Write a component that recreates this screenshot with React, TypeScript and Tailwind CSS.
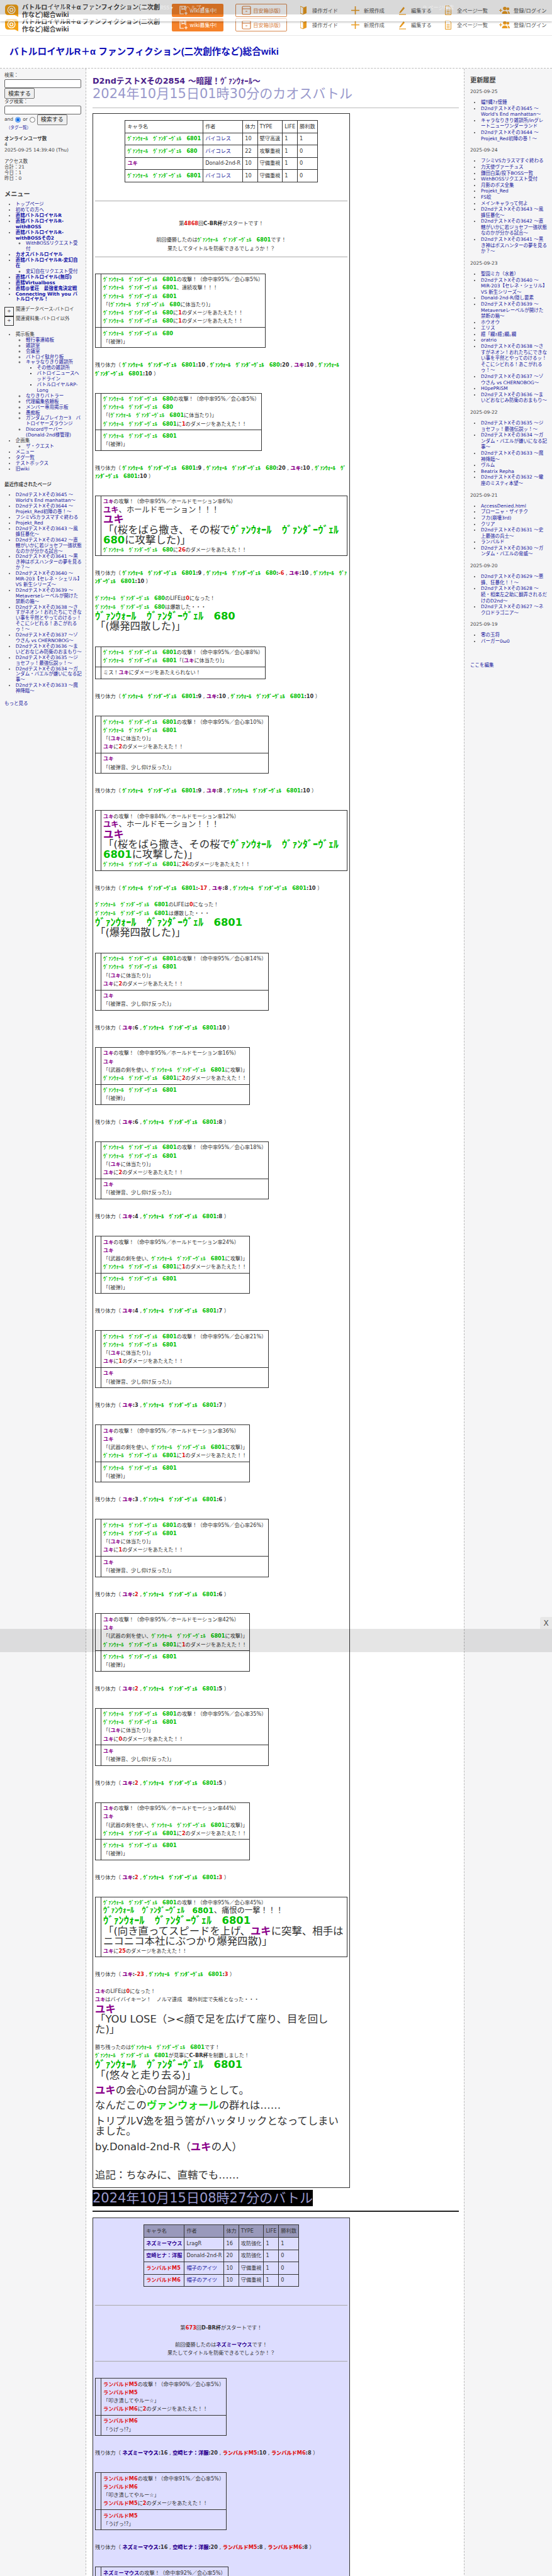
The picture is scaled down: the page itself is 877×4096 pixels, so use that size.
import type { ReactNode } from 'react';

const V = 'ｳﾞｧﾝｳｫｰﾙ　ｳﾞｧﾝﾀﾞｰｳﾞｪﾙ　';

function G({ n }: { n: string }) {
  return <b className="text-[#00c000]">{V}{n}</b>;
}
function Y() {
  return <b className="text-[#8a008a]">ユキ</b>;
}
function R({ children }: { children: ReactNode }) {
  return <b className="text-[#e01010]">{children}</b>;
}
function N() {
  return <b className="text-[#2c0090]">ネズミーマウス</b>;
}
function H() {
  return <b className="text-[#2c0090]">空崎ヒナ：洋服</b>;
}

function Card({ top, bottom }: { top: ReactNode; bottom?: ReactNode }) {
  return (
    <table className="border-collapse border border-[#333]">
      <tbody>
        <tr>
          <td className="w-[9px] min-w-[9px] border border-[#333]"></td>
          <td className="border border-[#333] px-[3px] py-[2.500px]">{top}</td>
        </tr>
        {bottom && (
          <tr>
            <td className="border border-[#333]"></td>
            <td className="border border-[#333] px-[3px] py-[2.500px]">{bottom}</td>
          </tr>
        )}
      </tbody>
    </table>
  );
}

function Hp({ children }: { children: ReactNode }) {
  return <div className="mt-[21px] mb-[23.700px]">残り体力（ {children} ）</div>;
}

function Val({ name, v, red }: { name: ReactNode; v: string; red?: boolean }) {
  return <b>{name}:{red ? <span className="text-[#e01010]">{v}</span> : v}</b>;
}

function Sep() {
  return <> , </>;
}

function YukiHit({ pct, dmg }: { pct: number; dmg: number }) {
  return (
    <Card
      top={<>
        <div><Y />の攻撃！（命中率95%／ホールドモーション率{pct}%）</div>
        <div><Y /></div>
        <div>「(武器の剣を使い、<G n="6801" />に攻撃)」</div>
        <div><G n="6801" />に<R>{dmg}</R>のダメージをあたえた！！</div>
      </>}
      bottom={<>
        <div><G n="6801" /></div>
        <div>「(被弾)」</div>
      </>}
    />
  );
}

function VanHit({ pct, dmg }: { pct: number; dmg: number }) {
  return (
    <Card
      top={<>
        <div><G n="6801" />の攻撃！（命中率95%／会心率{pct}%）</div>
        <div><G n="6801" /></div>
        <div>「(<Y />に体当たり)」</div>
        <div><Y />に<R>{dmg}</R>のダメージをあたえた！！</div>
      </>}
      bottom={<>
        <div><Y /></div>
        <div>「(被弾音、少し仰け反った)」</div>
      </>}
    />
  );
}

function HpDuel({ y, v, ry, rv }: { y: number; v: number; ry?: boolean; rv?: boolean }) {
  return (
    <Hp>
      <Val name={<Y />} v={String(y)} red={ry} /><Sep />
      <Val name={<G n="6801" />} v={String(v)} red={rv} />
    </Hp>
  );
}

function Ran({ m }: { m: string }) {
  return <b className="text-[#e01010]">ランバルド{m}</b>;
}

function RanCard({ a, b, pct, hit }: { a: string; b: string; pct: number; hit: number }) {
  return (
    <Card
      top={<>
        <div><Ran m={a} />の攻撃！（命中率{pct}%／会心率5%）</div>
        <div><Ran m={a} /></div>
        <div>「叩き潰してやルー☆」</div>
        <div><Ran m={b} />に<R>{hit}</R>のダメージをあたえた！！</div>
      </>}
      bottom={<>
        <div><Ran m={b} /></div>
        <div>「うげっ!?」</div>
      </>}
    />
  );
}

const headCell = 'border border-[#333] px-[3px] h-[19.600px] text-left font-normal';

function Result1() {
  const rows: [ReactNode, ReactNode, string, string, string, string][] = [
    [<G n="6801" />, <a className="text-[#1c1c9c]">バイコレス</a>, '10', '堅守高速', '1', '1'],
    [<G n="680" />, <a className="text-[#1c1c9c]">バイコレス</a>, '22', '攻撃重視', '1', '0'],
    [<Y />, 'Donald-2nd-R', '10', '守備重視', '1', '0'],
    [<G n="6801" />, <a className="text-[#1c1c9c]">バイコレス</a>, '10', '守備重視', '1', '0'],
  ];
  return (
    <table className="mx-auto border-collapse">
      <thead>
        <tr>
          {['キャラ名', '作者', '体力', 'TYPE', 'LIFE', '勝利数'].map(t => <th key={t} className={headCell}>{t}</th>)}
        </tr>
      </thead>
      <tbody>
        {rows.map((r, i) => (
          <tr key={i}>
            {r.map((c, j) => <td key={j} className="border border-[#333] px-[3px] h-[19.600px]">{c}</td>)}
          </tr>
        ))}
      </tbody>
    </table>
  );
}

function Result2() {
  const rows: [ReactNode, ReactNode, string, string, string, string][] = [
    [<N />, 'LragR', '16', '攻防強化', '1', '1'],
    [<H />, 'Donald-2nd-R', '20', '攻防強化', '1', '0'],
    [<Ran m="M5" />, <a className="text-[#1c1c9c]">帽子のアイツ</a>, '10', '守備重視', '1', '0'],
    [<Ran m="M6" />, <a className="text-[#1c1c9c]">帽子のアイツ</a>, '10', '守備重視', '1', '0'],
  ];
  return (
    <table className="mx-auto border-collapse">
      <thead>
        <tr className="bg-[#9999bb]">
          {['キャラ名', '作者', '体力', 'TYPE', 'LIFE', '勝利数'].map(t => <th key={t} className={headCell}>{t}</th>)}
        </tr>
      </thead>
      <tbody>
        {rows.map((r, i) => (
          <tr key={i}>
            {r.map((c, j) => <td key={j} className="border border-[#333] px-[3px] h-[19.600px]">{c}</td>)}
          </tr>
        ))}
      </tbody>
    </table>
  );
}

function Battle1() {
  return (
    <div className="border border-[#333] px-[3px] pt-[10px] pb-[11px] w-[409px] text-[8.180px] leading-[13.200px] text-[#333]">
      <Result1 />
      <hr className="mt-[29px] border-[#aaa]" />
      <div className="mt-[29px] text-center">
        第<R>4868</R>回<b>C-BR杯</b>がスタートです！<br /><br />
        前回優勝したのは<G n="6801" />です！<br />
        果たしてタイトルを防衛できるでしょうか！？
      </div>
      <hr className="mt-[6px] mb-[26px] border-[#aaa]" />

      <Card
        top={<>
          <div><G n="6801" />の攻撃！（命中率95%／会心率5%）</div>
          <div><G n="6801" />、連続攻撃！！！</div>
          <div><G n="6801" /></div>
          <div>「(<G n="680" />に体当たり)」</div>
          <div><G n="680" />に<R>1</R>のダメージをあたえた！！</div>
          <div><G n="680" />に<R>1</R>のダメージをあたえた！！</div>
        </>}
        bottom={<>
          <div><G n="680" /></div>
          <div>「(被弾)」</div>
        </>}
      />
      <Hp>
        <Val name={<G n="6801" />} v="10" /><Sep /><Val name={<G n="680" />} v="20" /><Sep />
        <Val name={<Y />} v="10" /><Sep /><Val name={<G n="6801" />} v="10" />
      </Hp>

      <Card
        top={<>
          <div><G n="680" />の攻撃！（命中率95%／会心率5%）</div>
          <div><G n="680" /></div>
          <div>「(<G n="6801" />に体当たり)」</div>
          <div><G n="6801" />に<R>1</R>のダメージをあたえた！！</div>
        </>}
        bottom={<>
          <div><G n="6801" /></div>
          <div>「(被弾)」</div>
        </>}
      />
      <Hp>
        <Val name={<G n="6801" />} v="9" /><Sep /><Val name={<G n="680" />} v="20" /><Sep />
        <Val name={<Y />} v="10" /><Sep /><Val name={<G n="6801" />} v="10" />
      </Hp>

      <Card
        top={<>
          <div><Y />の攻撃！（命中率95%／ホールドモーション率6%）</div>
          <div className="text-[12.300px] leading-[13.800px]"><Y />、ホールドモーション！！！</div>
          <div className="text-[16.400px] leading-[16.400px]">
            <Y /><br />
            「(桜をばら撒き、その桜で<G n="680" />に攻撃した)」
          </div>
          <div><G n="680" />に<R>26</R>のダメージをあたえた！！</div>
        </>}
      />
      <Hp>
        <Val name={<G n="6801" />} v="9" /><Sep /><Val name={<G n="680" />} v="-6" red /><Sep />
        <Val name={<Y />} v="10" /><Sep /><Val name={<G n="6801" />} v="10" />
      </Hp>
      <div className="-mt-[10px] mb-[23px]">
        <G n="680" />のLIFEは<R>0</R>になった！<br />
        <G n="680" />は爆散した・・・
        <div className="text-[16.400px] leading-[16.400px]">
          <G n="680" /><br />
          「(爆発四散した)」
        </div>
      </div>

      <Card
        top={<>
          <div><G n="6801" />の攻撃！（命中率95%／会心率8%）</div>
          <div><G n="6801" />「(<Y />に体当たり)」</div>
        </>}
        bottom={<div>ミス！<Y />にダメージをあたえられない！</div>}
      />
      <Hp>
        <Val name={<G n="6801" />} v="9" /><Sep /><Val name={<Y />} v="10" /><Sep /><Val name={<G n="6801" />} v="10" />
      </Hp>

      <VanHit pct={10} dmg={2} />
      <Hp>
        <Val name={<G n="6801" />} v="9" /><Sep /><Val name={<Y />} v="8" /><Sep /><Val name={<G n="6801" />} v="10" />
      </Hp>

      <Card
        top={<>
          <div><Y />の攻撃！（命中率84%／ホールドモーション率12%）</div>
          <div className="text-[12.300px] leading-[13.800px]"><Y />、ホールドモーション！！！</div>
          <div className="text-[16.400px] leading-[16.400px]">
            <Y /><br />
            「(桜をばら撒き、その桜で<G n="6801" />に攻撃した)」
          </div>
          <div><G n="6801" />に<R>26</R>のダメージをあたえた！！</div>
        </>}
      />
      <Hp>
        <Val name={<G n="6801" />} v="-17" red /><Sep /><Val name={<Y />} v="8" /><Sep /><Val name={<G n="6801" />} v="10" />
      </Hp>
      <div className="-mt-[10px] mb-[23px]">
        <G n="6801" />のLIFEは<R>0</R>になった！<br />
        <G n="6801" />は爆散した・・・
        <div className="text-[16.400px] leading-[16.400px]">
          <G n="6801" /><br />
          「(爆発四散した)」
        </div>
      </div>

      <VanHit pct={14} dmg={2} />
      <HpDuel y={6} v={10} />
      <YukiHit pct={16} dmg={2} />
      <HpDuel y={6} v={8} />
      <VanHit pct={18} dmg={2} />
      <HpDuel y={4} v={8} />
      <YukiHit pct={24} dmg={1} />
      <HpDuel y={4} v={7} />
      <VanHit pct={21} dmg={1} />
      <HpDuel y={3} v={7} />
      <YukiHit pct={36} dmg={1} />
      <HpDuel y={3} v={6} />
      <VanHit pct={26} dmg={1} />
      <HpDuel y={2} v={6} ry />
      <YukiHit pct={42} dmg={1} />
      <HpDuel y={2} v={5} ry />
      <VanHit pct={35} dmg={0} />
      <HpDuel y={2} v={5} ry />
      <YukiHit pct={44} dmg={2} />
      <HpDuel y={2} v={3} ry rv />

      <Card
        top={<>
          <div><G n="6801" />の攻撃！（命中率95%／会心率45%）</div>
          <div className="text-[12.300px] leading-[13.800px]"><G n="6801" />、痛恨の一撃！！！</div>
          <div className="text-[16.400px] leading-[16.400px]">
            <G n="6801" /><br />
            「(向き直ってスピードを上げ、<Y />に突撃、相手はニコニコ本社にぶつかり爆発四散)」
          </div>
          <div><Y />に<R>25</R>のダメージをあたえた！！</div>
        </>}
      />
      <HpDuel y={-23} v={3} ry rv />
      <div className="-mt-[10px]">
        <Y />のLIFEは<R>0</R>になった！<br />
        <Y />はバイバイキーン！　ノルマ達成　場外判定で失格となった・・・
        <div className="text-[16.400px] leading-[16.400px]">
          <Y /><br />
          「YOU LOSE（&gt;&lt;顔で足を広げて座り、目を回した)」
        </div>
      </div>
      <div className="mt-[13px]">
        勝ち残ったのは<G n="6801" />です！<br />
        <G n="6801" />が見事に<b>C-BR杯</b>を制覇しました！
        <div className="text-[16.400px] leading-[16.400px]">
          <G n="6801" /><br />
          「(悠々と走り去る)」
        </div>
      </div>
      <div className="mt-[8px] text-[16.400px] leading-[16.400px]">
        <div><Y />の会心の台詞が違うとして。</div>
        <div className="mt-[8px]">なんだこの<span className="text-[#20dd20] font-bold">ヴァンウォール</span>の群れは……</div>
        <div className="mt-[8px]">トリプルV逸を狙う筈がハッタリックとなってしまいました。</div>
        <div className="mt-[8px]">by.Donald-2nd-R（<Y />の人）</div>
        <div className="mt-[29px]">追記：ちなみに、直轄でも……</div>
      </div>
    </div>
  );
}

function Battle2() {
  return (
    <div className="border border-[#333] bg-[#ddddff] px-[3px] pt-[10px] pb-[8px] w-[409px] text-[8.180px] leading-[13.200px] text-[#333]">
      <Result2 />
      <hr className="mt-[29px] border-[#aaa]" />
      <div className="mt-[29px] text-center">
        第<R>673</R>回<b>D-BR杯</b>がスタートです！<br /><br />
        前回優勝したのは<N />です！<br />
        果たしてタイトルを防衛できるでしょうか！？
      </div>
      <hr className="mt-[6px] mb-[26px] border-[#aaa]" />
      <RanCard a="M5" b="M6" pct={90} hit={2} />
      <Hp>
        <Val name={<N />} v="16" /><Sep /><Val name={<H />} v="20" /><Sep />
        <Val name={<Ran m="M5" />} v="10" /><Sep /><Val name={<Ran m="M6" />} v="8" />
      </Hp>
      <RanCard a="M6" b="M5" pct={91} hit={2} />
      <Hp>
        <Val name={<N />} v="16" /><Sep /><Val name={<H />} v="20" /><Sep />
        <Val name={<Ran m="M5" />} v="8" /><Sep /><Val name={<Ran m="M6" />} v="8" />
      </Hp>
      <Card
        top={<>
          <div><N />の攻撃！（命中率92%／会心率5%）</div>
          <div><N /></div>
        </>}
      />
    </div>
  );
}

type Item = { t: string; b?: boolean; plain?: boolean; sub?: Item[] };

const menu: Item[] = [
  { t: 'トップページ' },
  { t: '初めての方へ' },
  { t: '直轄バトルロイヤルR', b: true },
  { t: '直轄バトルロイヤルR-withBOSS', b: true },
  { t: '直轄バトルロイヤルR-withBOSSその2', b: true, sub: [{ t: 'WithBOSSリクエスト受付' }] },
  { t: 'カオスバトルロイヤル', b: true },
  { t: '直轄バトルロイヤルR-変幻自在', b: true, sub: [{ t: '変幻自在リクエスト受付' }] },
  { t: '直轄バトルロイヤル(無印)', b: true },
  { t: '直轄Virtualboss', b: true },
  { t: '直轄@雀荘　最強雀鬼決定戦', b: true },
  { t: 'Connecting With you バトルロイヤル！', b: true },
];

const boards: Item[] = [
  {
    t: '掲示板集', plain: true, sub: [
      { t: '軽行事連絡板' },
      { t: '雑談室' },
      { t: '会議室' },
      { t: 'バトロイ駄弁り板' },
      { t: 'キャラなりきり雑談所', sub: [{ t: 'その他の雑談所' }, { t: 'バトロイニュースヘッドライン' }, { t: 'バトルロイヤルRP-Long' }] },
      { t: 'なりきりバトラー' },
      { t: '代理編集依頼板' },
      { t: 'メンバー専用掲示板' },
      { t: '愚痴板' },
      { t: 'ガンダムブレイカー3　バトロイヤーズラウンジ' },
      { t: 'Discordサーバー(Donald-2nd様管理)' },
    ],
  },
  { t: '企画集', plain: true, sub: [{ t: 'ザ・クエスト' }] },
  { t: 'メニュー' },
  { t: 'タグ一覧' },
  { t: 'テストボックス' },
  { t: '旧wiki' },
];

const recent = [
  'D2ndテストXその3645 ～World\'s End manhattan～',
  'D2ndテストXその3644 ～Projekt_Red初陣の巻！～',
  'フシミVSカラスマすぐ終わる',
  'Projekt_Red',
  'D2ndテストXその3643 ～風蜂狂暴化～',
  'D2ndテストXその3642 ～直轄がいかに若ジョセフ一強状態なのかが分かる試合～',
  'D2ndテストXその3641 ～黒き神はボスハンターの夢を見るか？～',
  'D2ndテストXその3640 ～MIR-203【セレネ・シェリル】VS 新生シリーズ～',
  'D2ndテストXその3639 ～Metaverseレーベルが開けた禁断の箱～',
  'D2ndテストXその3638 ～さすがネオン！おれたちにできない事を平然とやってのけるッ！そこにシビれる！あこがれるゥ！～',
  'D2ndテストXその3637 ～ゾウさん vs CHERNOBOG～',
  'D2ndテストXその3636 ～まいどおなじみ防衛のおまもり～',
  'D2ndテストXその3635 ～ジョセフッ！最強伝説ッ！～',
  'D2ndテストXその3634 ～ガンダム・バエルが嫌いになる記事～',
  'D2ndテストXその3633 ～魔神降臨～',
];

const history: [string, string[]][] = [
  ['2025-09-25', ['蟷ｻ蝿?ｫ懷錘', 'D2ndテストXその3645 ～World\'s End manhattan～', 'キャラなりきり雑談所/inグレートニューワンダーランド', 'D2ndテストXその3644 ～Projekt_Red初陣の巻！～']],
  ['2025-09-24', ['フシミVSカラスマすぐ終わる', '力天使ヴァーチュス', '鎌田白菜/投下BOSS一覧', 'WithBOSSリクエスト受付', '月影のボス全集', 'Projekt_Red', 'FS蛟', 'メインキャラって何よ', 'D2ndテストXその3643 ～風蜂狂暴化～', 'D2ndテストXその3642 ～直轄がいかに若ジョセフ一強状態なのかが分かる試合～', 'D2ndテストXその3641 ～黒き神はボスハンターの夢を見るか？～']],
  ['2025-09-23', ['聖園ミカ（水着）', 'D2ndテストXその3640 ～MIR-203【セレネ・シェリル】VS 新生シリーズ～', 'Donald-2nd-R/隠し要素', 'D2ndテストXその3639 ～Metaverseレーベルが開けた禁断の箱～', 'ホウオウ', 'エリス', '繧「繝ｫ繧ｭ繝｡繝', 'oratrio', 'D2ndテストXその3638 ～さすがネオン！おれたちにできない事を平然とやってのけるッ！そこにシビれる！あこがれるゥ！～', 'D2ndテストXその3637 ～ゾウさん vs CHERNOBOG～', 'H0pePRiSM', 'D2ndテストXその3636 ～まいどおなじみ防衛のおまもり～']],
  ['2025-09-22', ['D2ndテストXその3635 ～ジョセフッ！最強伝説ッ！～', 'D2ndテストXその3634 ～ガンダム・バエルが嫌いになる記事～', 'D2ndテストXその3633 ～魔神降臨～', 'ヴルム', 'Beatrix Repha', 'D2ndテストXその3632 ～蠍座のミスティ本望～']],
  ['2025-09-21', ['AccessDenied.html', 'ブローニャ・ザイチク', 'フカ(崩壊3rd)', 'クリア', 'D2ndテストXその3631 ～史上最強の兵士～', 'ランバルド', 'D2ndテストXその3630 ～ガンダム・バエルの脅威～']],
  ['2025-09-20', ['D2ndテストXその3629 ～悪蜂、狂暴化！！～', 'D2ndテストXその3628 ～続・相楽左之助に翻弄されるだけのD2nd～', 'D2ndテストXその3627 ～ネクロドラゴニア～']],
  ['2025-09-19', ['零の玉将', 'バーガー0ω0']],
];

function Tree({ items, depth }: { items: Item[]; depth: number }) {
  const ul = depth === 0 ? 'list-disc pl-[17.700px]' : depth === 1 ? 'list-[circle] pl-[16.400px]' : 'list-[square] pl-[17.500px]';
  return (
    <ul className={ul}>
      {items.map(it => (
        <li key={it.t}>
          <span className={it.plain ? '' : it.b ? 'font-bold text-[#1212a8]' : 'text-[#2020a0]'}>{it.t}</span>
          {it.sub && <Tree items={it.sub} depth={depth + 1} />}
        </li>
      ))}
    </ul>
  );
}

function LeftPane() {
  return (
    <aside className="w-[137px] shrink-0 border-r border-dashed border-[#bbb] bg-[#f5f5f6] pl-[7px] pr-[6px] pt-[7px] text-[7.500px] leading-[8.900px] text-[#444]">
      <div>検索：</div>
      <input className="block w-[122px] h-[14px] border border-[#666] rounded-[2px] bg-white mt-[1px]" readOnly />
      <button className="block w-[48px] h-[17px] mt-[0.500px] border border-[#777] rounded-[2px] bg-[#efefef] text-[9px] leading-[14px] text-[#222]">検索する</button>
      <div className="mt-[0.500px]">タグ検索：</div>
      <input className="block w-[122px] h-[14px] border border-[#666] rounded-[2px] bg-white mt-[1px]" readOnly />
      <div className="flex items-center h-[17px]">
        <span>and</span>
        <input type="radio" defaultChecked className="mx-[3px] size-[9px] accent-[#1a73e8]" />
        <span>or</span>
        <input type="radio" className="mx-[3px] size-[9px]" />
        <button className="w-[48px] h-[17px] border border-[#777] rounded-[2px] bg-[#efefef] text-[9px] leading-[14px] text-[#222]">検索する</button>
      </div>
      <div className="mt-[0.500px] pl-[3px] text-[6.500px] text-[#2020a0]">（タグ一覧）</div>
      <div className="mt-[9px] font-bold">オンラインユーザ数</div>
      <div>4</div>
      <div>2025-09-25 14:39:40 (Thu)</div>
      <div className="mt-[9px]">アクセス数</div>
      <div>合計：21</div>
      <div>今日：1</div>
      <div>昨日：0</div>
      <div className="mt-[13px] text-[10.200px] leading-[14px] font-bold">メニュー</div>
      <div className="mt-[5.500px]"><Tree items={menu} depth={0} /></div>
      <div className="mt-[6.500px] flex">
        <span className="flex items-center justify-center w-[15px] h-[15px] border border-[#333] shrink-0">+</span>
        <span className="pl-[3px]">関連データベース-バトロイ</span>
      </div>
      <div className="flex">
        <span className="flex items-center justify-center w-[15px] h-[15px] border border-[#333] shrink-0">+</span>
        <span className="pl-[3px]">関連資料集-バトロイ以外</span>
      </div>
      <div className="mt-[10px]"><Tree items={boards} depth={0} /></div>
      <div className="mt-[16px] font-bold">最近作成されたページ</div>
      <div className="mt-[8px]">
        <ul className="list-disc pl-[17.700px]">
          {recent.map(r => <li key={r} className="text-[#2020a0] marker:text-[#444]">{r}</li>)}
        </ul>
      </div>
      <div className="mt-[11px] text-[#2020a0]">もっと見る</div>
    </aside>
  );
}

function RightPane() {
  return (
    <aside className="flex-1 border-l border-dashed border-[#bbb] bg-[#f5f5f6] pl-[9px] pr-[7px] pt-[12px] text-[7.500px] leading-[9.600px] text-[#444]">
      <div className="text-[10.200px] leading-[14px] font-bold">更新履歴</div>
      {history.map(([d, items], i) => (
        <div key={d} className={i === 0 ? 'mt-[6px]' : 'mt-[9px]'}>
          <div>{d}</div>
          <ul className="list-disc pl-[17px] mt-[7.500px] text-[#2020a0] marker:text-[#444]">
            {items.map(t => <li key={t}>{t}</li>)}
          </ul>
        </div>
      ))}
      <div className="mt-[28px] text-[#2020a0]">ここを編集</div>
    </aside>
  );
}

function Logo() {
  return (
    <svg width="21" height="20" viewBox="0 0 31 29" className="shrink-0">
      <path d="M7 0h17a7 7 0 0 1 7 7v22l-8-4H7a7 7 0 0 1-7-7V7a7 7 0 0 1 7-7z" fill="#f5a316" />
      <circle cx="15" cy="12.5" r="8.5" fill="none" stroke="#fff" strokeWidth="2" />
      <circle cx="15" cy="12.5" r="3.6" fill="none" stroke="#fff" strokeWidth="2" />
    </svg>
  );
}

function HeaderRow() {
  return (
    <div className="flex items-center h-full text-[8.200px] text-[#555] font-['Noto_Sans_CJK_JP',sans-serif]">
      <div className="ml-[8px] flex items-center w-[266px] shrink-0">
        <Logo />
        <div className="ml-[6px] w-[228px] text-[10px] leading-[11.600px] font-bold text-[#444]">バトルロイヤルR＋α ファンフィクション(二次創作など)総合wiki</div>
      </div>
      <div className="ml-[-1px] flex items-center justify-center w-[82px] h-[21px] rounded-[2px] bg-[#f5822a] text-white shrink-0">
        <svg width="15" height="15" viewBox="0 0 15 15" fill="none" stroke="#fff" strokeWidth="1.2"><path d="M8 13H2V1h9v7" /><path d="M5 1v5l2-1 2 1V1" /><path d="M11.5 9.5v5M9 12h5" /></svg>
        <span className="ml-[3px]">wiki募集中!</span>
      </div>
      <div className="ml-[19px] flex items-center justify-center w-[82px] h-[21px] rounded-[2px] border border-[#d98a50] text-[#d87b3a] shrink-0">
        <svg width="15" height="15" viewBox="0 0 15 15" fill="none" stroke="#d87b3a" strokeWidth="1.2"><rect x="1" y="1" width="13" height="13" rx="1.5" /><path d="M1 5h13M6 9h3" /></svg>
        <span className="ml-[3px]">目安箱(β版)</span>
      </div>
      <svg className="ml-[21px] shrink-0" width="10" height="15" viewBox="0 0 10 15"><path d="M0 1l5 2v11l-5-2z" fill="none" stroke="#e89a20" strokeWidth="1" /><path d="M5 3l5-2v11l-5 2z" fill="#e89a20" /></svg>
      <span className="ml-[9px] w-[40px] whitespace-nowrap">操作ガイド</span>
      <svg className="ml-[22px] shrink-0" width="13" height="13" viewBox="0 0 13 13"><path d="M6.5 0v13M0 6.5h13" stroke="#e89a20" strokeWidth="1.6" /></svg>
      <span className="ml-[7px] w-[33px] whitespace-nowrap">新規作成</span>
      <svg className="ml-[23px] shrink-0" width="11" height="15" viewBox="0 0 11 15"><path d="M1 10l6-8 2 2-6 7-2.5 1z" fill="#e89a20" /><path d="M0 14h11" stroke="#e89a20" strokeWidth="1.2" /></svg>
      <span className="ml-[8px] w-[33px] whitespace-nowrap">編集する</span>
      <svg className="ml-[21px] shrink-0" width="10" height="15" viewBox="0 0 10 15" fill="none" stroke="#e89a20" strokeWidth="1"><path d="M.5.5h6l3 3v11h-9z" /><path d="M2.5 7h5M2.5 9.5h5M2.5 12h5" /></svg>
      <span className="ml-[9px] w-[49px] whitespace-nowrap">全ページ一覧</span>
      <svg className="ml-[18px] shrink-0" width="17" height="13" viewBox="0 0 17 13" fill="#e89a20"><path d="M0 6.5h5M2.5 4v5" stroke="#e89a20" strokeWidth="1.2" /><circle cx="9" cy="3.5" r="2.8" /><circle cx="14" cy="4" r="2.2" /><path d="M4.500 12c0-3 2-4.500 4.500-4.500s4.500 1.500 4.500 4.500zM14.500 12c0-2-.5-3.500-1.500-4.500 2 0 4 1.500 4 4.500z" /></svg>
      <span className="ml-[6px] whitespace-nowrap">登録/ログイン</span>
    </div>
  );
}

function Header() {
  return (
    <div className="relative h-[57px] border-b border-[#e8e8e8]">
      <div className="h-[23px]" />
      <div className="h-[33px]"><HeaderRow /></div>
      <div className="absolute left-0 right-0 top-0 h-[33.500px] bg-white/65 shadow-[0_1px_3px_rgba(0,0,0,0.3)]">
        <div className="absolute left-0 right-0 top-0 h-[33px] overflow-hidden"><HeaderRow /></div>
        <div className="absolute left-0 right-0 top-0 h-[22.700px] bg-black/15 text-[8.200px] text-white/60 font-['Noto_Sans_CJK_JP',sans-serif]">
          <div className="flex items-center h-full">
            <span className="ml-[75px]">新規作成 ▾</span>
            <span className="ml-[22px]">編集 ▾</span>
            <span className="ml-[30px]">ページ一覧 ▾</span>
            <span className="ml-[20px]">RSS ▾</span>
            <span className="ml-[20px]">ヘルプ ▾</span>
            <span className="ml-[347px]">⚲ ページ検索</span>
          </div>
        </div>
      </div>
    </div>
  );
}

export default function App() {
  return (
    <div className="relative w-[877px] h-[4096px] overflow-hidden bg-white font-['DejaVu_Sans','Noto_Sans_CJK_JP',sans-serif]">
      <Header />
      <div className="flex items-center h-[51px] pl-[15px] text-[14.700px] font-bold text-[#1010b8] font-['Liberation_Sans','Noto_Sans_CJK_JP',sans-serif]">
        バトルロイヤルR＋α ファンフィクション(二次創作など)総合wiki
      </div>
      <div className="flex border-t border-dashed border-[#bbb]">
        <LeftPane />
        <main className="w-[600px] shrink-0 pl-[10px] pr-[8px] pt-[11px]">
          <h1 className="text-[12.800px] leading-[17px] font-bold text-[#4a1d8a]">D2ndテストXその2854 ～暗躍！ｳﾞｧﾝｳｫｰﾙ～</h1>
          <h2 className="text-[21px] leading-[25px] text-[#9999cc]">2024年10月15日01時30分のカオスバトル</h2>
          <hr className="mt-[9px] mb-[8px] border-[#bbb]" />
          <Battle1 />
          <h2 className="mt-[3px] w-fit text-[21px] leading-[26px] bg-black text-[#9999cc]">2024年10月15日08時27分のバトル</h2>
          <hr className="mt-[7px] mb-[9px] border-t-2 border-[#222]" />
          <Battle2 />
        </main>
        <RightPane />
      </div>
      <div className="absolute left-0 right-0 top-[2590px] h-[37px] bg-black/10" />
      <div className="absolute right-0 top-[2571px] w-[19px] h-[19px] rounded-tl-[3px] bg-[#e8e8e8] flex items-center justify-center text-[12px] text-[#555]">X</div>
    </div>
  );
}
